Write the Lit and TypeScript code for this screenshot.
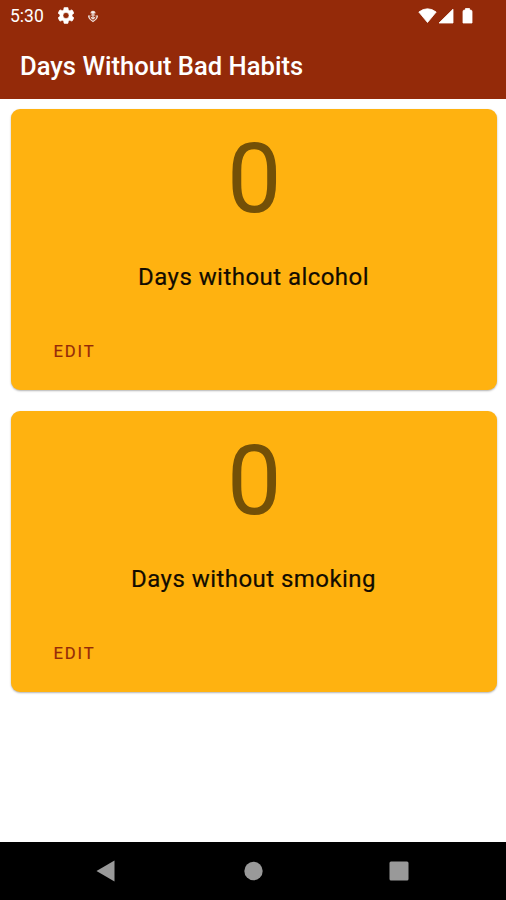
import { LitElement, html, css, svg } from "lit";

class HabitCard extends LitElement {
  static properties = { days: { type: Number }, label: { type: String } };
  declare days: number;
  declare label: string;
  static styles = css`
    :host {
      display: flex;
      flex-direction: column;
      box-sizing: border-box;
      height: 281px;
      background: #ffb210;
      border-radius: 9px;
      box-shadow: 0 1px 2px rgba(0, 0, 0, 0.3);
      font-family: Roboto, sans-serif;
    }
    .days {
      margin-top: 12px;
      text-align: center;
      font-size: 97px;
      line-height: 117px;
      letter-spacing: -1.5px;
      color: #735007;
    }
    .label {
      margin-top: 24px;
      text-align: center;
      font-size: 24px;
      line-height: 30px;
      letter-spacing: 0.45px;
      color: #120c01;
      -webkit-text-stroke: 0.2px #120c01;
    }
    .edit {
      align-self: flex-start;
      margin: 50px 0 0 43px;
      padding: 0;
      border: 0;
      background: none;
      font: 400 16.6px/20px Roboto, sans-serif;
      letter-spacing: 1.9px;
      color: #942a09;
      -webkit-text-stroke: 0.2px #942a09;
    }
  `;
  render() {
    return html`
      <div class="days">${this.days}</div>
      <div class="label">${this.label}</div>
      <button class="edit">EDIT</button>
    `;
  }
}
customElements.define("habit-card", HabitCard);

class AppRoot extends LitElement {
  static styles = css`
    :host {
      display: flex;
      flex-direction: column;
      height: 900px;
      background: #fff;
      font-family: Roboto, sans-serif;
    }
    header {
      height: 99px;
      background: #942a09;
      color: #fff;
    }
    .status {
      display: flex;
      align-items: center;
      height: 32px;
      padding: 0 32px 0 10px;
      font-size: 17.5px;
    }
    .gear { margin: -1px 0 0 14px; }
    .debug { margin: -1px 0 0 13px; }
    .wifi { margin-left: auto; }
    h1 {
      margin: 18px 0 0 20px;
      font-size: 25.6px;
      line-height: 32px;
      font-weight: 500;
    }
    main {
      flex: 1;
      display: flex;
      flex-direction: column;
      gap: 21px;
      padding: 10px 9.5px 0 10.5px;
    }
    nav {
      display: flex;
      align-items: center;
      height: 58px;
      background: #000;
    }
    nav svg { display: block; width: 100%; }
  `;
  render() {
    return html`
      <header>
        <div class="status">
          <span>5:30</span>
          <svg class="gear" width="16" height="17" viewBox="2.5 2 19 20"><path fill="#fff" stroke="#fff" stroke-width=".7" fill-rule="evenodd" d="M19.14 12.94c.04-.3.06-.61.06-.94s-.02-.64-.07-.94l2.03-1.58a.5.5 0 0 0 .12-.61l-1.92-3.32a.49.49 0 0 0-.59-.22l-2.39.96a7 7 0 0 0-1.62-.94l-.36-2.54A.48.48 0 0 0 13.92 2.4h-3.84a.47.47 0 0 0-.47.41l-.36 2.54c-.59.24-1.13.57-1.62.94l-2.39-.96a.48.48 0 0 0-.59.22L2.74 8.87a.47.47 0 0 0 .12.61l2.03 1.58a7 7 0 0 0 0 1.88l-2.03 1.58a.5.5 0 0 0-.12.61l1.92 3.32c.12.22.37.29.59.22l2.39-.96c.5.38 1.03.7 1.62.94l.36 2.54c.05.24.24.41.48.41h3.84c.24 0 .44-.17.47-.41l.36-2.54a7 7 0 0 0 1.62-.94l2.39.96c.22.08.47 0 .59-.22l1.92-3.32a.47.47 0 0 0-.12-.61zM12 15.6a3.6 3.6 0 1 1 0-7.2 3.6 3.6 0 0 1 0 7.2z"/></svg>
          <svg class="debug" width="12" height="16" viewBox="0 0 12 16"><path fill="#fff" fill-opacity=".85" d="M3.500 5.500a2.500 2.800 0 0 1 5 0z"/><path fill="none" stroke="#fff" stroke-opacity=".85" stroke-width="1.200" d="M6 4v7M4 7h4M1 8h2.500M8.500 8H11M1.700 8.500Q2 11 6 13.500Q10 11 10.300 8.500M4 9.300L6 11L8 9.300"/></svg>
          <svg class="wifi" width="56" height="20" viewBox="0 0 56 20"><path fill="#fff" stroke="#fff" stroke-width=".8" stroke-linejoin="round" d="M.8 6Q9.500-.5 18.200 6L9.500 16.500zM21 17L35 3.200V17zM45 5.500q0-1.500 1.500-1.500h1V2.500h4V4h1q1.500 0 1.500 1.500V17h-9z"/></svg>
        </div>
        <h1>Days Without Bad Habits</h1>
      </header>
      <main>
        <habit-card .days=${0} .label=${"Days without alcohol"}></habit-card>
        <habit-card .days=${0} .label=${"Days without smoking"}></habit-card>
      </main>
      <nav>
        <svg height="58" viewBox="0 0 506 58">${svg`<path fill="#999" d="M96.500 29l18-10.500v21z"/><circle cx="253.500" cy="29" r="9.200" fill="#999"/><rect x="389.500" y="19.500" width="19" height="19" rx="1.500" fill="#999"/>`}</svg>
      </nav>
    `;
  }
}
customElements.define("app-root", AppRoot);
